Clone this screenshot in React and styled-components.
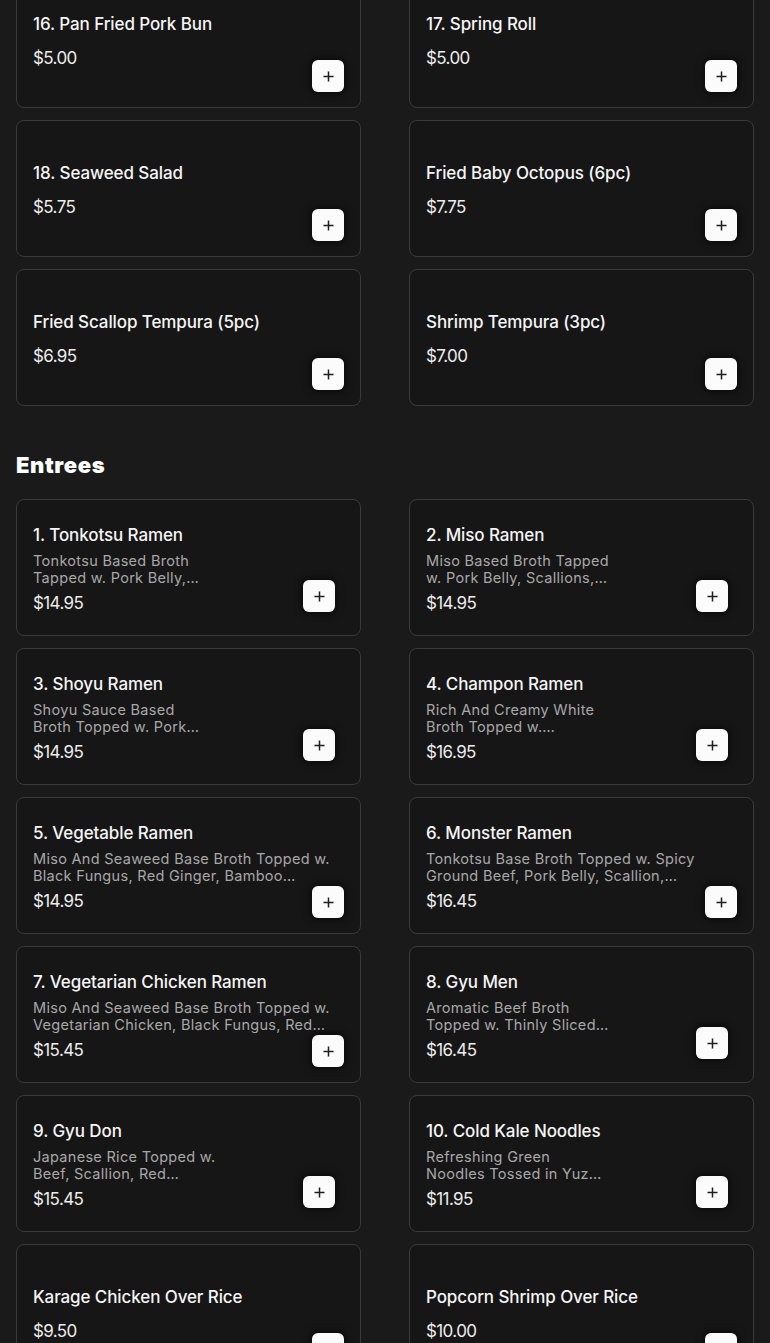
import React from "react";
import styled, { createGlobalStyle } from "styled-components";

const Global = createGlobalStyle`
  html, body { margin: 0; padding: 0; background: #1a1a1a; }
  body { font-family: Inter, "Open Sans", sans-serif; color: #f2f2f2; -webkit-font-smoothing: antialiased; }
  * { box-sizing: border-box; }
`;

const Page = styled.main`
  padding: 0 16px;
  margin-top: -29px;
`;

const Section = styled.section`
  display: flex;
  flex-direction: column;
`;

const SectionTitle = styled.h2`
  margin: 46px 0 20px;
  font-size: 22px;
  line-height: 27px;
  font-weight: 900;
  color: #ffffff;
  letter-spacing: 0.6px;
`;

const Grid = styled.div`
  display: grid;
  grid-template-columns: 1fr 1fr;
  column-gap: 48px;
  row-gap: 12px;
`;

/* Info and the add button share one grid cell: the button sits in its corner over the text area */
const Card = styled.article`
  height: 137px;
  display: grid;
  grid-template-areas: "stack";
  padding: 3px 16px 0;
  background: #161616;
  border: 1px solid #3a3a3a;
  border-radius: 8px;
`;

const Info = styled.div`
  grid-area: stack;
  align-self: center;
  min-width: 0;
  display: flex;
  flex-direction: column;
  gap: 6px;
`;

const Title = styled.h3`
  margin: 0;
  font-size: 17px;
  line-height: 22px;
  font-weight: 500;
  color: #f5f5f5;
  letter-spacing: -0.1px;
`;

const Description = styled.p`
  margin: 0;
  max-width: ${(p) => (p.$narrow ? "183px" : "300px")};
  font-size: 14.5px;
  line-height: 17px;
  font-weight: 400;
  color: #a8a8a8;
  letter-spacing: 0.3px;
  display: -webkit-box;
  -webkit-line-clamp: 2;
  -webkit-box-orient: vertical;
  overflow: hidden;
`;

const Price = styled.span`
  margin-top: ${(p) => (p.$spaced ? 6 : 0)}px;
  font-size: 17px;
  line-height: 22px;
  font-weight: 400;
  color: #ececec;
  letter-spacing: -0.6px;
`;

const AddButton = styled.button`
  grid-area: stack;
  align-self: end;
  justify-self: end;
  margin: 0 ${(p) => (p.$image ? 9 : 0)}px ${(p) => (p.$image ? 23 : 15)}px 0;
  width: 32px;
  height: 32px;
  padding: 0;
  border: none;
  border-radius: 6px;
  background: #fbfbfb;
  color: #1e1e1e;
  display: flex;
  align-items: center;
  justify-content: center;
  box-shadow: 0 0 6px 2px rgba(0, 0, 0, 0.55);
  cursor: pointer;
`;

const PlusIcon = () => (
  <svg width="11" height="11" viewBox="0 0 11 11" aria-hidden="true">
    <path d="M5.5 0.5v10M0.5 5.5h10" stroke="currentColor" strokeWidth="1.5" strokeLinecap="butt" fill="none" />
  </svg>
);

const appetizers = [
  { name: "16. Pan Fried Pork Bun", price: "$5.00" },
  { name: "17. Spring Roll", price: "$5.00" },
  { name: "18. Seaweed Salad", price: "$5.75" },
  { name: "Fried Baby Octopus (6pc)", price: "$7.75" },
  { name: "Fried Scallop Tempura (5pc)", price: "$6.95" },
  { name: "Shrimp Tempura (3pc)", price: "$7.00" },
];

const entrees = [
  { name: "1. Tonkotsu Ramen", desc: "Tonkotsu Based Broth Tapped w. Pork Belly, Scallions, Bamboo Shoots, Black Fungus, Egg", price: "$14.95", image: true },
  { name: "2. Miso Ramen", desc: "Miso Based Broth Tapped w. Pork Belly, Scallions, Bamboo Shoots, Black Fungus, Egg", price: "$14.95", image: true },
  { name: "3. Shoyu Ramen", desc: "Shoyu Sauce Based Broth Topped w. Pork Belly, Scallions, Bamboo Shoots, Egg", price: "$14.95", image: true },
  { name: "4. Champon Ramen", desc: "Rich And Creamy White Broth Topped w. Seafood, Cabbage, Bean Sprouts", price: "$16.95", image: true },
  { name: "5. Vegetable Ramen", desc: "Miso And Seaweed Base Broth Topped w. Black Fungus, Red Ginger, Bamboo Shoots, Corn, Scallion", price: "$14.95" },
  { name: "6. Monster Ramen", desc: "Tonkotsu Base Broth Topped w. Spicy Ground Beef, Pork Belly, Scallion, Bamboo Shoots, Egg", price: "$16.45" },
  { name: "7. Vegetarian Chicken Ramen", desc: "Miso And Seaweed Base Broth Topped w. Vegetarian Chicken, Black Fungus, Red Ginger, Corn", price: "$15.45" },
  { name: "8. Gyu Men", desc: "Aromatic Beef Broth Topped w. Thinly Sliced Beef, Scallion, Red Ginger", price: "$16.45", image: true },
  { name: "9. Gyu Don", desc: "Japanese Rice Topped w. Beef, Scallion, Red Ginger, Egg", price: "$15.45", image: true },
  { name: "10. Cold Kale Noodles", desc: "Refreshing Green Noodles Tossed in Yuzu Sauce w. Cucumber, Egg", price: "$11.95", image: true },
  { name: "Karage Chicken Over Rice", price: "$9.50" },
  { name: "Popcorn Shrimp Over Rice", price: "$10.00" },
];

function MenuCard({ item }) {
  return (
    <Card>
      <Info>
        <Title>{item.name}</Title>
        {item.desc && <Description $narrow={item.image}>{item.desc}</Description>}
        <Price $spaced={!item.desc}>{item.price}</Price>
      </Info>
      <AddButton $image={item.image} aria-label={`Add ${item.name}`}>
        <PlusIcon />
      </AddButton>
    </Card>
  );
}

export default function App() {
  return (
    <>
      <Global />
      <Page>
        <Section>
          <Grid>
            {appetizers.map((it) => (
              <MenuCard key={it.name} item={it} />
            ))}
          </Grid>
        </Section>
        <Section>
          <SectionTitle>Entrees</SectionTitle>
          <Grid>
            {entrees.map((it) => (
              <MenuCard key={it.name} item={it} />
            ))}
          </Grid>
        </Section>
      </Page>
    </>
  );
}
